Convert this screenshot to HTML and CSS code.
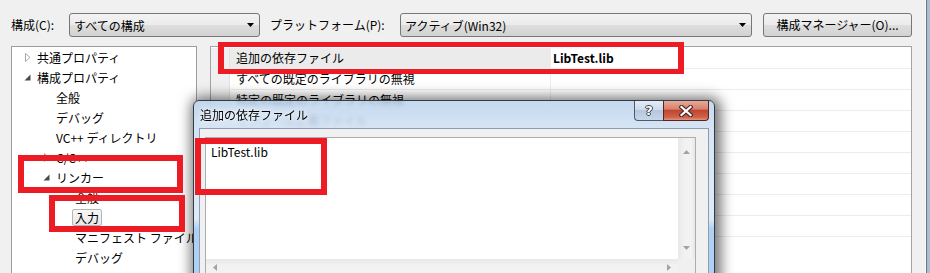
FILE: index.html
```html
<!DOCTYPE html>
<html lang="ja">
<head>
<meta charset="utf-8">
<title>プロパティ ページ</title>
<link rel="stylesheet" href="styles.css">
</head>
<body>
<div class="screen">
  <div class="workspace">
    <div class="toolbar">
      <span class="lbl lbl-config">構成(C):</span>
      <div class="combo combo-config"><span>すべての構成</span><svg class="drop" width="7" height="4" viewBox="0 0 7 4"><path d="M0 0h7L3.5 4z" fill="#000"/></svg></div>
      <span class="lbl lbl-platform">プラットフォーム(P):</span>
      <div class="combo combo-platform"><span>アクティブ(Win32)</span><svg class="drop" width="7" height="4" viewBox="0 0 7 4"><path d="M0 0h7L3.5 4z" fill="#000"/></svg></div>
      <div class="btn">構成マネージャー(O)...</div>
    </div>
    <div class="main">
      <div class="tree">
        <div class="trow l0"><span class="exp"><svg width="6" height="9" viewBox="0 0 6 9"><path d="M.5.5 5 4.5.5 8.5z" fill="#fff" stroke="#a8a8a8"/></svg></span><span>共通プロパティ</span></div>
        <div class="trow l0"><span class="exp"><svg width="7" height="7" viewBox="0 0 7 7"><path d="M6.5 .5V6.5H.5z" fill="#4a4a4a"/></svg></span><span>構成プロパティ</span></div>
        <div class="trow l1"><span class="exp"></span><span>全般</span></div>
        <div class="trow l1"><span class="exp"></span><span>デバッグ</span></div>
        <div class="trow l1"><span class="exp"></span><span>VC++ ディレクトリ</span></div>
        <div class="trow l1"><span class="exp"><svg width="6" height="9" viewBox="0 0 6 9"><path d="M.5.5 5 4.5.5 8.5z" fill="#fff" stroke="#a8a8a8"/></svg></span><span>C/C++</span></div>
        <div class="trow l1"><span class="exp"><svg width="7" height="7" viewBox="0 0 7 7"><path d="M6.5 .5V6.5H.5z" fill="#4a4a4a"/></svg></span><span>リンカー</span></div>
        <div class="trow l2"><span class="exp"></span><span>全般</span></div>
        <div class="trow l2"><span class="exp"></span><span class="sel">入力</span></div>
        <div class="trow l2"><span class="exp"></span><span>マニフェスト ファイル</span></div>
        <div class="trow l2"><span class="exp"></span><span>デバッグ</span></div>
      </div>
      <div class="grid">
        <div class="prow cur"><span class="gut"></span><span class="pname">追加の依存ファイル</span><span class="pval">LibTest.lib</span></div>
        <div class="prow"><span class="gut"></span><span class="pname">すべての既定のライブラリの無視</span><span class="pval"></span></div>
        <div class="prow"><span class="gut"></span><span class="pname">特定の既定のライブラリの無視</span><span class="pval"></span></div>
        <div class="prow"><span class="gut"></span><span class="pname">モジュール定義ファイル</span><span class="pval"></span></div>
        <div class="prow"><span class="gut"></span><span class="pname"></span><span class="pval"></span></div>
        <div class="prow"><span class="gut"></span><span class="pname"></span><span class="pval"></span></div>
        <div class="prow"><span class="gut"></span><span class="pname"></span><span class="pval"></span></div>
        <div class="prow"><span class="gut"></span><span class="pname"></span><span class="pval"></span></div>
        <div class="prow"><span class="gut"></span><span class="pname"></span><span class="pval"></span></div>
      </div>
    </div>
  </div>
  <div class="edge"></div>

  <div class="dialog">
    <div class="dlg-title">
      <span class="dlg-caption">追加の依存ファイル</span>
      <div class="cap-btns">
        <span class="cap help">?</span>
        <span class="cap close"><svg width="14" height="12" viewBox="0 0 14 12"><path d="M2.5 2 11.5 10M11.5 2 2.5 10" stroke="#4a2b28" stroke-width="4.4" stroke-linecap="square"/><path d="M2.5 2 11.5 10M11.5 2 2.5 10" stroke="#fff" stroke-width="2.2" stroke-linecap="square"/></svg></span>
      </div>
    </div>
    <div class="client">
      <div class="edit">
        <div class="edit-text">LibTest.lib</div>
        <div class="vscroll">
          <svg class="up" width="7" height="4" viewBox="0 0 7 4"><path d="M3.5 0 7 4H0z" fill="#a3a3a3"/></svg>
          <svg class="down" width="7" height="4" viewBox="0 0 7 4"><path d="M0 0h7L3.5 4z" fill="#a3a3a3"/></svg>
        </div>
        <div class="hscroll">
          <svg width="4" height="7" viewBox="0 0 4 7"><path d="M4 0v7L0 3.5z" fill="#a3a3a3"/></svg>
          <svg width="4" height="7" viewBox="0 0 4 7"><path d="M0 0v7l4-3.5z" fill="#a3a3a3"/></svg>
        </div>
        <div class="corner"></div>
      </div>
    </div>
  </div>

  <div class="mark m1"></div>
  <div class="mark m2"></div>
  <div class="mark m3"></div>
  <div class="mark m4"></div>
</div>
</body>
</html>
```

FILE: styles.css
```css
* { box-sizing: border-box; }
html, body { margin: 0; padding: 0; }
body {
  width: 930px;
  height: 273px;
  overflow: hidden;
  background: #f0f0f0;
  font-family: "Noto Sans CJK JP", "Noto Sans", sans-serif;
  font-size: 12px;
  color: #000;
}
.screen {
  position: relative;
  display: flex;
  width: 930px;
  height: 273px;
  overflow: hidden;
}
.workspace {
  flex: 1;
  display: flex;
  flex-direction: column;
  min-width: 0;
}
.edge {
  width: 5px;
  flex: none;
  background: linear-gradient(to right, #fafafa 0 1px, #66778c 1px 2px, #aebdce 2px);
}

/* toolbar */
.toolbar {
  height: 46px;
  flex: none;
  display: flex;
  align-items: flex-start;
  padding: 13px 0 0 11px;
}
.lbl { line-height: 24px; white-space: nowrap; }
.lbl-config { width: 58px; }
.lbl-platform { width: 130px; margin-left: 10px; }
.combo {
  height: 24px;
  display: flex;
  align-items: center;
  justify-content: space-between;
  padding: 0 5px 0 4px;
  border: 1px solid #767676;
  border-radius: 3px;
  background: linear-gradient(#f3f3f3, #ebebeb 50%, #dedede 50%, #d2d2d2);
  white-space: nowrap;
}
.combo-config { width: 191px; }
.combo-platform { width: 352px; }
.btn {
  margin-left: 11px;
  width: 149px;
  height: 24px;
  line-height: 22px;
  text-align: center;
  border: 1px solid #767676;
  border-radius: 3px;
  background: linear-gradient(#f3f3f3, #ebebeb 50%, #dedede 50%, #d2d2d2);
  white-space: nowrap;
}

/* main */
.main {
  flex: 1;
  display: flex;
  gap: 13px;
  padding-left: 11px;
  min-height: 0;
}
.tree {
  width: 186px;
  flex: none;
  border: 1px solid #9c9c9c;
  border-bottom: none;
  background: #fff;
  overflow: hidden;
}
.trow {
  height: 20px;
  display: flex;
  align-items: center;
  white-space: nowrap;
}
.l0 { padding-left: 6px; }
.l1 { padding-left: 25px; }
.l2 { padding-left: 44px; }
.exp {
  width: 19px;
  flex: none;
  display: flex;
  align-items: center;
  justify-content: center;
}
.sel {
  margin-left: -3px;
  padding: 0 2px;
  height: 17px;
  line-height: 15px;
  border: 1px solid #b5b5b5;
  border-radius: 2px;
  background: linear-gradient(#f7f7f7, #e8e8e8);
}

.grid {
  width: 702px;
  flex: none;
  border: 1px solid #a3a3a3;
  border-bottom: none;
  background: #fff;
  padding-top: 1px;
}
.prow {
  display: flex;
  height: 21px;
  border-bottom: 1px solid #ececec;
  line-height: 20px;
}
.gut {
  width: 19px;
  flex: none;
  background: #f0f0f0;
  border-right: 1px solid #e2e2e2;
}
.pname {
  width: 321px;
  flex: none;
  padding-left: 6px;
  border-right: 1px solid #ececec;
  white-space: nowrap;
  overflow: hidden;
}
.pval {
  flex: 1;
  padding-left: 2px;
  font-weight: bold;
}
.prow.cur .pname { background: #ebebeb; }

/* dialog */
.dialog {
  position: absolute;
  left: 193px;
  top: 100px;
  width: 522px;
  height: 200px;
  display: flex;
  flex-direction: column;
  padding: 0 5px;
  border: 1px solid #313c4b;
  border-radius: 6px 6px 0 0;
  background: linear-gradient(rgba(184, 208, 234, .82), rgba(210, 226, 244, .9) 27px, rgba(222, 234, 248, .96) 118px, rgba(172, 207, 242, .97) 128px, rgba(172, 207, 242, .97));
  backdrop-filter: blur(2px);
  box-shadow: 2px 1px 13px 4px rgba(0, 0, 0, .55);
}
.dlg-title {
  height: 27px;
  flex: none;
  display: flex;
  align-items: flex-start;
}
.dlg-caption {
  line-height: 27px;
  padding-left: 1px;
  text-shadow: 0 0 8px #fff, 0 0 4px #fff;
}
.cap-btns {
  margin-left: auto;
  display: flex;
}
.cap {
  height: 20px;
  display: flex;
  align-items: center;
  justify-content: center;
}
.help {
  width: 29px;
  border: 1px solid #4d5b70;
  border-top: none;
  border-right: none;
  border-radius: 0 0 0 4px;
  background: linear-gradient(#e3ebf5, #cfdbea 45%, #b5c7dc 50%, #c7d7ea);
  color: #fff;
  font-weight: bold;
  font-size: 13px;
  font-family: "DejaVu Sans", sans-serif;
  text-shadow: 1px 0 #3b4350, -1px 0 #3b4350, 0 1px #3b4350, 0 -1px #3b4350;
}
.close {
  width: 46px;
  border: 1px solid #5b231b;
  border-top: none;
  border-radius: 0 0 4px 0;
  background: linear-gradient(#eaa996, #d6826f 42%, #c2452f 50%, #cd624b 85%, #e29580);
}
.client {
  flex: 1;
  background: #f0f0f0;
  border: 1px solid #8a9db3;
  border-bottom: none;
  padding: 8px 12px 0 5px;
}
.edit {
  border: 1px solid #abadb3;
  border-bottom: none;
  background: #fff;
  display: grid;
  grid-template-columns: 1fr 17px;
  grid-template-rows: 121px 17px;
}
.edit-text {
  padding: 6px 0 0 5px;
  line-height: 16px;
}
.vscroll {
  display: flex;
  flex-direction: column;
  align-items: center;
  justify-content: space-between;
  padding: 12px 0 9px;
  background: linear-gradient(to right, #e8e8e8, #f2f2f2 40%, #f2f2f2 80%, #e6e6e6);
}
.hscroll {
  display: flex;
  align-items: center;
  justify-content: space-between;
  padding: 0 7px;
  background: linear-gradient(#e8e8e8, #f2f2f2 40%, #f2f2f2 80%, #e6e6e6);
}
.corner { background: #f0f0f0; }

/* annotation marks */
.mark {
  position: absolute;
  border: 6px solid #ed1c24;
}
.m1 { left: 218px; top: 42px; width: 466px; height: 32px; border-width: 5px 6px; }
.m2 { left: 18px; top: 155px; width: 165px; height: 38px; }
.m3 { left: 49px; top: 195px; width: 136px; height: 37px; }
.m4 { left: 195px; top: 138px; width: 132px; height: 57px; }
```
